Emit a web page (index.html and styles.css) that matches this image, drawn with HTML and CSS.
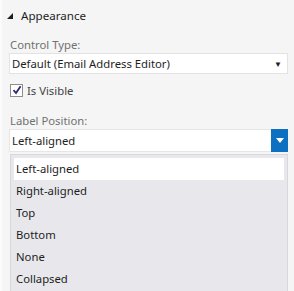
FILE: index.html
```html
<!DOCTYPE html>
<html lang="en">
<head>
  <meta charset="UTF-8">
  <title>Appearance</title>
  <link rel="stylesheet" href="styles.css">
</head>
<body>

  <div class="panel">
    <div class="section-head">
      <span class="caret"></span>
      <span>Appearance</span>
    </div>

    <div class="field">
      <div class="field-label">Control Type:</div>
      <div class="combo">
        <span>Default (Email Address Editor)</span>
        <span class="arrow">&#9660;</span>
      </div>
    </div>

    <label class="check">
      <span class="box">
        <svg width="10" height="10" viewBox="0 0 10 10"><path d="M1.5 5.2 L4 8 L8.6 1.2" fill="none" stroke="#2b2b7a" stroke-width="1.8"/></svg>
      </span>
      <span>Is Visible</span>
    </label>

    <div class="field second">
      <div class="field-label">Label Position:</div>
      <div class="combo open">
        <span>Left-aligned</span>
        <span class="btn">
          <svg width="8" height="5" viewBox="0 0 8 5"><path d="M0 0 H8 L4 5 Z" fill="#fff"/></svg>
        </span>
      </div>
      <ul class="options">
        <li class="selected">Left-aligned</li>
        <li>Right-aligned</li>
        <li>Top</li>
        <li>Bottom</li>
        <li>None</li>
        <li>Collapsed</li>
      </ul>
    </div>
  </div>

</body>
</html>
```

FILE: styles.css
```css
body {
  margin: 0;
  background-color: #f5f5f5;
  font-family: "Noto Sans", "Open Sans", sans-serif;
  font-size: 11.3px;
  color: #1e1e1e;
}

.panel {
  padding: 5px 6px 0 7px;
  border-left: 2px solid #fbfbfb;
}

.section-head {
  display: flex;
  align-items: center;
  gap: 8px;
  height: 20px;
  font-size: 11.6px;
}

.caret {
  width: 0;
  height: 0;
  margin-left: -2px;
  margin-top: 1px;
  border-left: 6px solid transparent;
  border-bottom: 6px solid #1e1e1e;
}

.field {
  margin-top: 12px;
}

.field.second {
  margin-top: 15px;
}

.field-label {
  color: #717171;
  height: 16px;
  line-height: 16px;
  padding-left: 1px;
}

.combo {
  box-sizing: border-box;
  display: flex;
  justify-content: space-between;
  align-items: center;
  height: 21px;
  background-color: #fff;
  border: 1px solid #e3e3e3;
  padding-left: 2px;
}

.combo .arrow {
  font-size: 8px;
  padding-right: 5px;
}

.combo.open {
  height: 23px;
  margin-top: 0;
  border-color: #e6e6e6;
}

.btn {
  display: flex;
  align-items: center;
  justify-content: center;
  width: 17px;
  height: 23px;
  margin-right: -1px;
  background-color: #0e70c0;
}

.check {
  display: flex;
  align-items: center;
  gap: 4px;
  height: 16px;
  margin-top: 8px;
  color: #444;
  padding-left: 1px;
}

.box {
  display: flex;
  align-items: center;
  justify-content: center;
  width: 11px;
  height: 11px;
  background-color: #fff;
  border: 1px solid #8e8f8f;
}

.options {
  list-style: none;
  margin: 2px 0 0 1px;
  padding: 3px;
  background-color: #e8e8ec;
  border: 1px solid #d8d8dc;
}

.options li {
  height: 22px;
  line-height: 22px;
  padding-left: 2px;
}

.options li.selected {
  background-color: #fff;
}
```
